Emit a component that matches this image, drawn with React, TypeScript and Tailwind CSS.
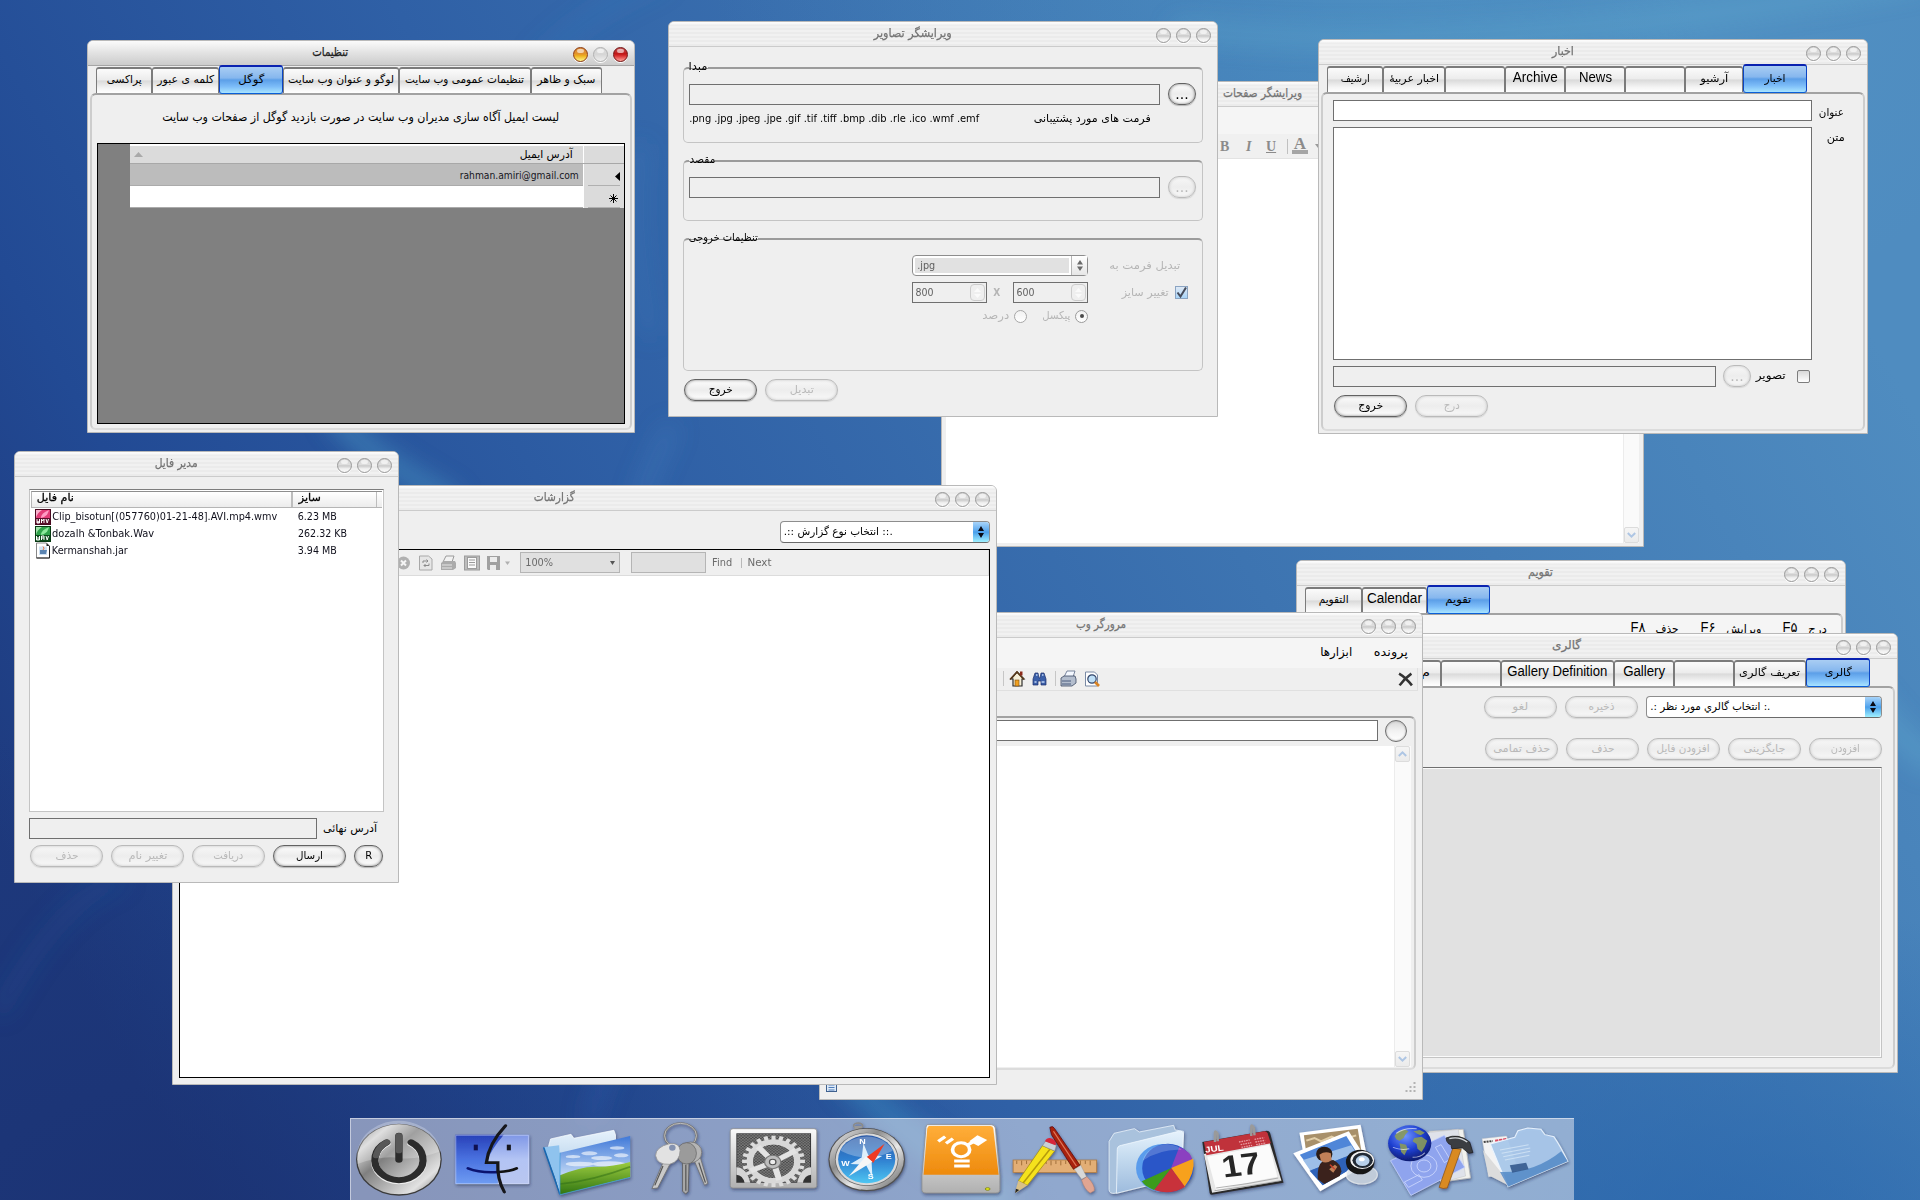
import { useLayoutEffect, useRef, type ReactNode } from "react";

/* Text squeezed or stretched to an exact pixel width. */
function Fit({ w, children, className = "", rtl = false }: { w: number; children: ReactNode; className?: string; rtl?: boolean }) {
  const ref = useRef<HTMLSpanElement>(null);
  useLayoutEffect(() => {
    const el = ref.current;
    if (!el) return;
    el.style.transform = "none";
    const natural = el.getBoundingClientRect().width;
    if (natural > 0) el.style.transform = `scaleX(${w / natural})`;
  }, [w]);
  return (
    <span className={"inline-flex shrink-0 justify-center whitespace-nowrap " + className} style={{ width: w }}>
      <span ref={ref} dir={rtl ? "rtl" : "ltr"} className="inline-block shrink-0">
        {children}
      </span>
    </span>
  );
}

const lightTone = {
  idle: "border-[#989898] bg-[linear-gradient(180deg,#d6d6d6_0%,#dedede_45%,#c9c9c9_52%,#f0f0f0_75%,#fafafa_100%)]",
  clear: "border-[#b0b0b0] bg-[linear-gradient(180deg,#dadada_0%,#d6d6d6_50%,#efefef_100%)]",
  amber: "border-[#8c3a10] bg-[linear-gradient(180deg,#d88a3c_0%,#e2922a_45%,#eeb01c_60%,#fdf68a_100%)]",
  red: "border-[#741212] bg-[linear-gradient(180deg,#c45454_0%,#bf1616_45%,#d83030_60%,#ffa59c_100%)]",
};

function Light({ tone }: { tone: keyof typeof lightTone }) {
  return (
    <span className={"flex h-[15px] w-[15px] justify-center rounded-full border shadow-[0_1px_0_#fff] " + lightTone[tone]}>
      <span className="mt-px h-[4px] w-[7px] rounded-full bg-white/60" />
    </span>
  );
}

function Win({ pos, title, tw, active = false, children, shift = "" }: { pos: string; title: string; tw: number; active?: boolean; children?: ReactNode; shift?: string }) {
  return (
    <section className={"absolute isolate flex flex-col overflow-hidden rounded-t-[6px] border border-[#b9b9b9] bg-[#efefef] " + pos}>
      <header
        className={
          "flex h-[25px] shrink-0 items-center border-b pr-[6px] " +
          (active
            ? "border-[#a5a5a5] bg-linear-to-b from-[#fbfbfb] via-[#e2e2e2] to-[#cccccc]"
            : "border-[#cbcbcb] bg-[linear-gradient(180deg,rgba(255,255,255,0.9)_0px,rgba(255,255,255,0)_4px),repeating-linear-gradient(180deg,#f1f1f1_0px,#f1f1f1_2px,#ebebeb_2px,#ebebeb_4px)]")
        }
      >
        <div className={"flex flex-1 justify-center pb-[3px] text-[12px] leading-[16px] " + (active ? "text-[#202020] " : "text-[#747474] ") + shift}>
          <Fit w={tw} rtl className="[-webkit-text-stroke:0.25px_currentColor]">
            {title}
          </Fit>
        </div>
        <div className="flex gap-[5px] pt-[3px]">
          <Light tone={active ? "amber" : "idle"} />
          <Light tone={active ? "clear" : "idle"} />
          <Light tone={active ? "red" : "idle"} />
        </div>
      </header>
      {children}
    </section>
  );
}

function Pill({ children, tw = 0, className, off = false }: { children?: ReactNode; tw?: number; className: string; off?: boolean }) {
  return (
    <button
      className={
        "flex h-[22px] shrink-0 items-center justify-center rounded-full border pb-px text-[11px] leading-[14px] " +
        (off
          ? "border-[#bababa] bg-linear-to-b from-[#f7f7f7] via-[#ededed] to-[#f8f8f8] text-[#b9b9b9] shadow-[inset_0_0_3px_#c4c4c4,0_1px_1px_#d6d6d6] "
          : "border-[#626262] bg-linear-to-b from-[#fdfdfd] via-[#ececec] to-[#ffffff] text-black shadow-[inset_0_0_3px_#7c7c7c,0_1px_1px_#b5b5b5] ") +
        className
      }
    >
      {tw ? (
        <Fit w={tw} rtl>
          {children}
        </Fit>
      ) : (
        children
      )}
    </button>
  );
}

function Tab({ children, tw = 0, w, on = false, latin = false }: { children?: ReactNode; tw?: number; w: string; on?: boolean; latin?: boolean }) {
  return (
    <div
      className={
        "flex shrink-0 items-center justify-center rounded-t-[3px] " +
        w +
        (on
          ? " z-10 h-[29px] rounded-b-[3px] border border-t-2 border-t-[#0a22b0] border-r-[#0b45c4] border-b-[#0a5fd8] border-l-[#0b45c4] bg-[linear-gradient(180deg,#a9cdf3_0%,#86b7ee_42%,#5c9fe8_50%,#7cbcf8_75%,#a8e4ff_100%)] text-[11px]"
          : " mt-[2px] h-[26px] border border-t-2 border-b-0 border-[#7b7b7b] bg-[linear-gradient(180deg,#fbfbfb_0%,#ececec_45%,#dadada_50%,#f4f4f4_80%,#ffffff_100%)] text-[11px]")
      }
    >
      {children && (
        <Fit
          w={tw}
          rtl={!latin}
          className={latin ? "pb-[6px] font-['Liberation_Sans',sans-serif] text-[14px] leading-[16px]" : on ? "leading-[14px]" : "pb-[2px] leading-[14px]"}
        >
          {children}
        </Fit>
      )}
    </div>
  );
}

function TabRow({ className, children }: { className: string; children: ReactNode }) {
  return <div className={"relative z-10 -mt-px flex h-[28px] shrink-0 " + className}>{children}</div>;
}

function Panel({ className, children }: { className: string; children?: ReactNode }) {
  return (
    <div className={"flex shrink-0 flex-col rounded-[6px] border-2 border-[#cdcdcd] border-t-[#a2a2a2] border-b-[#dcdcdc] " + className}>{children}</div>
  );
}

function Field({ className }: { className: string }) {
  return <div className={"h-[21px] shrink-0 border border-[#6f6f6f] " + className} />;
}

function Combo({ className, children, tw }: { className: string; children: ReactNode; tw: number }) {
  return (
    <div className={"flex h-[22px] shrink-0 items-stretch overflow-hidden rounded-[4px] border border-[#8d8d8d] border-b-[#6a6a6a] bg-white " + className}>
      <div className="flex flex-1 items-center pl-[3px] text-[11px] leading-[14px]">
        <Fit w={tw}>{children}</Fit>
      </div>
      <div className="flex w-[16px] items-center justify-center bg-[linear-gradient(180deg,#a8d4fa_0%,#5aa8ee_45%,#4a9eea_50%,#9ef0ff_100%)]">
        <svg className="h-[12px] w-[6px]" viewBox="0 0 6 12">
          <path d="M3 0 6 5H0zM3 12 0 7h6z" fill="#0a0a14" />
        </svg>
      </div>
    </div>
  );
}

function ScrollButton({ up = false }: { up?: boolean }) {
  return (
    <div className="flex h-[16px] w-[15px] shrink-0 items-center justify-center rounded-[2px] border border-[#dcdcdc] bg-linear-to-b from-[#f5f5f5] to-[#ebebeb]">
      <svg className={up ? "h-[6px] w-[9px]" : "h-[6px] w-[9px] rotate-180"} viewBox="0 0 9 6">
        <path d="M.8 5 4.5 1.4 8.2 5" fill="none" stroke="#aec6e4" strokeWidth="2" />
      </svg>
    </div>
  );
}

function Wallpaper() {
  return (
    <svg className="absolute inset-0 h-full w-full" viewBox="0 0 1920 1200" preserveAspectRatio="none">
      <defs>
        <linearGradient id="sky" x1="0" y1="0.7" x2="1" y2="0.35">
          <stop offset="0" stopColor="#1e3a7e" />
          <stop offset="0.15" stopColor="#224a94" />
          <stop offset="0.4" stopColor="#2f60a6" />
          <stop offset="0.65" stopColor="#3d74b1" />
          <stop offset="1" stopColor="#4f8cc0" />
        </linearGradient>
        <radialGradient id="low" cx="0.1" cy="1.02" r="0.42">
          <stop offset="0" stopColor="#1a3070" stopOpacity="0.7" />
          <stop offset="1" stopColor="#1a3070" stopOpacity="0" />
        </radialGradient>
        <radialGradient id="hi" cx="0.72" cy="-0.02" r="0.35">
          <stop offset="0" stopColor="#55a3cf" stopOpacity="0.35" />
          <stop offset="1" stopColor="#55a3cf" stopOpacity="0" />
        </radialGradient>
        <radialGradient id="corner" cx="0.9" cy="1.05" r="0.3">
          <stop offset="0" stopColor="#2463ab" stopOpacity="0.7" />
          <stop offset="1" stopColor="#2463ab" stopOpacity="0" />
        </radialGradient>
        <filter id="soft" x="-50%" y="-50%" width="200%" height="200%">
          <feGaussianBlur stdDeviation="12" />
        </filter>
      </defs>
      <rect width="1920" height="1200" fill="url(#sky)" />
      <rect width="1920" height="1200" fill="url(#low)" />
      <rect width="1920" height="1200" fill="url(#hi)" />
      <rect width="1920" height="1200" fill="url(#corner)" />
      <g fill="none" filter="url(#soft)" strokeLinecap="round">
        <path d="M540 60Q590 10 660 -20" stroke="#3c7fc0" strokeWidth="14" opacity="0.3" />
        <path d="M0 1010Q60 900 120 880" stroke="#2f62a8" strokeWidth="10" opacity="0.3" />
        <path d="M335 415Q360 450 450 500" stroke="#52aad0" strokeWidth="18" opacity="0.5" />
        <path d="M640 500Q650 470 670 430" stroke="#4f8fcf" strokeWidth="12" opacity="0.35" />
        <path d="M850 1080Q900 1130 1000 1200" stroke="#3f9fd0" strokeWidth="26" opacity="0.4" />
        <path d="M590 1120Q600 1080 620 1050" stroke="#3a70c0" strokeWidth="12" opacity="0.35" />
        <path d="M1180 30Q1500 60 1920 -20" stroke="#66b5d2" strokeWidth="16" opacity="0.35" />
        <path d="M1870 700Q1900 740 1930 760" stroke="#66b5d8" strokeWidth="24" opacity="0.35" />
        <path d="M640 150Q630 230 650 330" stroke="#3f86c0" strokeWidth="14" opacity="0.3" />
      </g>
    </svg>
  );
}

function SettingsWindow() {
  return (
    <Win pos="left-[87px] top-[40px] h-[393px] w-[548px]" title="تنظیمات" tw={36} active>
      <TabRow className="pl-[8px]">
        <Tab w="w-[56px]" tw={35}>پراکسی</Tab>
        <Tab w="w-[67px]" tw={57}>کلمه ی عبور</Tab>
        <Tab w="w-[64px]" tw={26} on>گوگل</Tab>
        <Tab w="w-[116px]" tw={106}>لوگو و عنوان وب سایت</Tab>
        <Tab w="w-[132px]" tw={119}>تنظیمات عمومی وب سایت</Tab>
        <Tab w="w-[71px]" tw={58}>سبک و ظاهر</Tab>
      </TabRow>
      <Panel className="mx-[2px] h-[337px]">
        <div className="flex h-[48px] shrink-0 items-center justify-center pb-[5px] text-[12px] leading-[16px]">
          <Fit w={397} rtl>لیست ایمیل آگاه سازی مدیران وب سایت در صورت بازدید گوگل از صفحات وب سایت</Fit>
        </div>
        <div className="ml-[5px] flex h-[281px] w-[528px] flex-col border border-black bg-[#808080] pl-[32px]">
          <div className="flex h-[20px] border-t-2 border-b border-t-white border-b-[#a8a8a8] bg-[#dbdbdb]">
            <div className="flex flex-1 items-center justify-between border-r border-white pr-[10px] pl-[4px] text-[11px] leading-[14px]">
              <svg className="h-[5px] w-[9px]" viewBox="0 0 9 5">
                <path d="M4.5 0 9 5H0z" fill="#a9a9a9" />
              </svg>
              <Fit w={53} rtl>آدرس ایمیل</Fit>
            </div>
            <div className="w-[40px]" />
          </div>
          <div className="flex h-[22px]">
            <div className="flex flex-1 items-center justify-end border-b border-[#ababab] bg-[#bcbcbc] pt-[2px] pr-[4px] text-[11px] leading-[14px] text-[#16161e]">
              <Fit w={119} className="font-['DejaVu_Sans_Condensed','DejaVu_Sans',sans-serif]">rahman.amiri@gmail.com</Fit>
            </div>
            <div className="flex w-[41px] border-l border-white bg-[#dbdbdb] px-[4px]">
              <div className="flex flex-1 items-center justify-end border-b border-[#b0b0b0] pt-[3px]">
                <svg className="h-[9px] w-[5px]" viewBox="0 0 5 9">
                  <path d="M5 0v9L0 4.500z" />
                </svg>
              </div>
            </div>
          </div>
          <div className="flex h-[22px]">
            <div className="flex-1 border-b border-[#ababab] bg-white" />
            <div className="flex w-[41px] border-l border-white bg-[#dbdbdb] px-[4px]">
              <div className="flex flex-1 items-center justify-end border-b border-[#b0b0b0] pt-[3px] pr-[2px]">
                <svg className="h-[9px] w-[9px]" viewBox="0 0 9 9" stroke="#000">
                  <path d="M4.500 0v9M0 4.500h9M1.500 1.500l6 6M7.500 1.500l-6 6" />
                </svg>
              </div>
            </div>
          </div>
        </div>
      </Panel>
    </Win>
  );
}

function Group({ label, tw, className, children }: { label: string; tw: number; className: string; children: ReactNode }) {
  return (
    <fieldset className={"ml-[14px] flex w-[520px] shrink-0 flex-col rounded-[5px] border border-t-2 border-[#c4c4c4] border-t-[#9b9b9b] " + className}>
      <div className="-mt-[9px] mb-[9px] ml-[5px] flex h-[14px] shrink-0 text-[11px] leading-[14px]">
        <Fit w={tw} rtl className="bg-linear-to-b from-[#efefef] from-60% to-transparent to-60%">{label}</Fit>
      </div>
      {children}
    </fieldset>
  );
}

function Spin({ value }: { value: string }) {
  return (
    <div className="flex h-[21px] w-[75px] shrink-0 items-center justify-between border border-[#6f6f6f] pr-px pl-[2px] text-[11px] leading-[14px] text-[#5f5f5f]">
      <Fit w={18} className="font-['DejaVu_Sans_Condensed','DejaVu_Sans',sans-serif]">{value}</Fit>
      <span className="flex h-[17px] w-[15px] items-center justify-center rounded-[4px] border border-[#cccccc]">
        <svg className="h-[10px] w-[7px]" viewBox="0 0 7 10">
          <path d="M3.500 0 7 4H0zM3.500 10 0 6h7z" fill="#fafafa" />
        </svg>
      </span>
    </div>
  );
}

function ImageEditorWindow() {
  return (
    <Win pos="left-[668px] top-[21px] h-[396px] w-[550px]" title="ویرایشگر تصاویر" tw={78}>
      <Group label="مبدا" tw={19} className="mt-[20px] h-[76px]">
        <div className="flex pl-[5px]">
          <Field className="mt-px w-[471px]" />
          <Pill className="ml-[8px] w-[28px] pb-[5px] text-[14px]">...</Pill>
        </div>
        <div className="flex items-center justify-between pt-[7px] pr-[51px] pl-[5px] text-[11px] leading-[14px]">
          <Fit w={290} className="font-['DejaVu_Sans_Condensed','DejaVu_Sans',sans-serif]">.png .jpg .jpeg .jpe .gif .tif .tiff .bmp .dib .rle .ico .wmf .emf</Fit>
          <Fit w={117} rtl>فرمت های مورد پشتیبانی</Fit>
        </div>
      </Group>
      <Group label="مقصد" tw={26} className="mt-[17px] h-[61px]">
        <div className="flex pl-[5px]">
          <Field className="mt-px w-[471px]" />
          <Pill off className="ml-[8px] w-[28px] pb-[5px] text-[14px]">...</Pill>
        </div>
      </Group>
      <Group label="تنظیمات خروجی" tw={69} className="mt-[17px] h-[133px]">
        <div className="flex items-center pt-px pl-[228px]">
          <div className="flex h-[21px] w-[176px] items-stretch rounded-[4px] border border-[#8d8d8d] bg-white text-[11px] leading-[14px] text-[#5f5f5f]">
            <div className="m-[2px] flex flex-1 items-center bg-[#e1e1e1] pl-[2px]">
              <Fit w={18} className="font-['DejaVu_Sans_Condensed','DejaVu_Sans',sans-serif]">.jpg</Fit>
            </div>
            <div className="flex w-[16px] items-center justify-center border-l border-[#b5b5b5] bg-linear-to-b from-white to-[#e6e6e6]">
              <svg className="h-[11px] w-[6px]" viewBox="0 0 6 11">
                <path d="M3 0 6 4.600H0zM3 11 0 6.400h6z" fill="#6a6a6a" />
              </svg>
            </div>
          </div>
          <Fit w={71} rtl className="ml-[21px] text-[11px] leading-[14px] text-[#b5b5b5]">تبدیل فرمت به</Fit>
        </div>
        <div className="mt-[6px] flex items-center pl-[228px]">
          <Spin value="800" />
          <Fit w={7} className="mr-[13px] ml-[6px] text-[10px] font-bold leading-[14px] text-[#b5b5b5]">X</Fit>
          <Spin value="600" />
          <Fit w={47} rtl className="ml-[34px] text-[11px] leading-[14px] text-[#b5b5b5]">تغییر سایز</Fit>
          <span className="ml-[6px] flex h-[13px] w-[13px] items-center justify-center border border-[#8ba4c2] bg-linear-to-b from-[#dfe9f5] to-[#a8d4f8]">
            <svg className="h-[12px] w-[11px]" viewBox="0 0 11 12">
              <path d="M1.500 5.500 4.500 9.500 10 .500" fill="none" stroke="#454b5a" strokeWidth="2" />
            </svg>
          </span>
        </div>
        <div className="mt-[6px] flex items-center pl-[298px] text-[11px] leading-[14px] text-[#b5b5b5]">
          <Fit w={27} rtl>درصد</Fit>
          <span className="ml-[5px] h-[13px] w-[13px] rounded-full border border-[#a6a6a6] bg-linear-to-b from-[#f2f2f2] to-white" />
          <Fit w={28} rtl className="ml-[15px]">پیکسل</Fit>
          <span className="ml-[5px] flex h-[13px] w-[13px] items-center justify-center rounded-full border border-[#9a9a9a] bg-linear-to-b from-[#f2f2f2] to-white">
            <span className="h-[4px] w-[4px] rounded-full bg-[#4b4b4b]" />
          </span>
        </div>
      </Group>
      <div className="mt-[8px] flex gap-[8px] pl-[15px]">
        <Pill className="w-[73px]" tw={24}>خروج</Pill>
        <Pill off className="w-[73px]" tw={24}>تبدیل</Pill>
      </div>
    </Win>
  );
}

function PageEditorWindow() {
  return (
    <Win pos="left-[941px] top-[81px] h-[466px] w-[703px]" title="ویرایشگر صفحات" tw={79} shift="pl-[2px]">
      <div className="h-[27px] shrink-0 bg-[#f5f5f5]" />
      <div className="flex h-[25px] shrink-0 items-center border-b border-[#e3e3e3] bg-[#f0f0f0] pl-[278px] font-['Liberation_Serif',serif] text-[14px] font-bold text-[#8b8b8b]">
        <span className="w-[23px]">B</span>
        <span className="w-[23px] pl-[3px] italic">I</span>
        <span className="w-[21px] underline">U</span>
        <span className="h-[15px] w-px bg-[#c0c0c0]" />
        <span className="ml-[4px] flex h-[16px] w-[16px] items-start justify-center border-b-4 border-[#a5a5a5] text-[17px] leading-[12px]">A</span>
        <svg className="ml-[7px] h-[4px] w-[6px]" viewBox="0 0 6 4">
          <path d="M0 0h6L3 4z" fill="#9a9a9a" />
        </svg>
      </div>
      <div className="mr-[4px] mb-[3px] ml-[4px] flex flex-1 justify-end bg-white">
        <div className="flex w-[16px] flex-col justify-end border-l border-[#ececec] bg-[#fafafa]">
          <ScrollButton />
        </div>
      </div>
    </Win>
  );
}

function NewsWindow() {
  return (
    <Win pos="left-[1318px] top-[39px] h-[395px] w-[550px]" title="اخبار" tw={22}>
      <TabRow className="pl-[8px]">
        <Tab w="w-[56px]" tw={29}>ارشیف</Tab>
        <Tab w="w-[62px]" tw={50}>اخبار عربیۀ</Tab>
        <Tab w="w-[60px]" />
        <Tab w="w-[60px]" tw={45} latin>Archive</Tab>
        <Tab w="w-[60px]" tw={33} latin>News</Tab>
        <Tab w="w-[60px]" />
        <Tab w="w-[58px]" tw={28}>آرشیو</Tab>
        <Tab w="w-[64px]" tw={21} on>اخبار</Tab>
      </TabRow>
      <Panel className="mx-[2px] h-[339px]">
        <div className="flex pt-[6px] pl-[10px]">
          <Field className="w-[479px] bg-white" />
          <Fit w={25} rtl className="mt-[6px] ml-[7px] text-[11px] leading-[14px]">عنوان</Fit>
        </div>
        <div className="flex pt-[6px] pl-[10px]">
          <div className="h-[233px] w-[479px] border border-[#6f6f6f] bg-white" />
          <Fit w={18} rtl className="mt-[4px] ml-[15px] h-[14px] text-[11px] leading-[14px]">متن</Fit>
        </div>
        <div className="flex items-center pt-[5px] pl-[10px]">
          <Field className="mt-px w-[383px]" />
          <Pill off className="ml-[7px] w-[28px] pb-[5px] text-[14px]">...</Pill>
          <Fit w={30} rtl className="ml-[5px] text-[11px] leading-[14px]">تصویر</Fit>
          <span className="ml-[11px] h-[13px] w-[13px] rounded-[2px] border border-[#7d7d7d] bg-linear-to-b from-[#d8d8d8] to-white" />
        </div>
        <div className="flex gap-[8px] pt-[8px] pl-[11px]">
          <Pill className="w-[73px]" tw={25}>خروج</Pill>
          <Pill off className="w-[73px]" tw={16}>درج</Pill>
        </div>
      </Panel>
    </Win>
  );
}

function MediaIcon({ kind }: { kind: "wmv" | "wav" | "jar" }) {
  if (kind === "jar")
    return (
      <svg className="h-[17px] w-[16px]" viewBox="0 0 16 17">
        <path d="M1.500 1h10l3 3v12h-13z" fill="#fff" stroke="#888" />
        <path d="M14.500 4v12h-13" fill="none" stroke="#222" />
        <path d="M11.500 1v3h3z" fill="#222" />
        <rect x="4" y="4.500" width="8" height="8.500" fill="#cfe2f3" />
        <path d="M5 12h6l1-4H5z" fill="#5b84b1" />
        <path d="M8 4.500q2 1.500 0 3.500" stroke="#e66f3a" fill="none" />
      </svg>
    );
  const pink = kind === "wmv";
  return (
    <svg className="h-[16px] w-[16px]" viewBox="0 0 16 16">
      <rect x=".5" y=".5" width="15" height="15" fill={pink ? "#e23d78" : "#2fa24a"} stroke={pink ? "#4a0a20" : "#063a12"} />
      <path d="M1 1h6Q2 4 1 9z" fill={pink ? "#f8b0cc" : "#9fe0a8"} />
      <path d="M14 1Q6 4 6 9l3-1Q13 6 14 1z" fill={pink ? "#ff9cc4" : "#8de89c"} />
      <rect x="1" y="9" width="14" height="6" fill={pink ? "#5a0e2b" : "#0c4a1b"} />
      {pink ? (
        <path d="M2 10v4h1v-2 2h1.500v-4M6.500 14v-4l1.200 2L9 10v4M11 10l1.200 4L13.500 10" stroke="#fff" fill="none" />
      ) : (
        <path d="M1.500 10v4h3v-4M3 11v3M6.500 14v-4h2.500v4M6.500 12h2.500M11 10l1.200 4L13.500 10" stroke="#fff" fill="none" />
      )}
    </svg>
  );
}

function FileManagerWindow() {
  const rows: { kind: "wmv" | "wav" | "jar"; name: string; nw: number; size: string; sw: number }[] = [
    { kind: "wmv", name: "Clip_bisotun[(057760)01-21-48].AVI.mp4.wmv", nw: 225, size: "6.23 MB", sw: 39 },
    { kind: "wav", name: "dozalh &Tonbak.Wav", nw: 102, size: "262.32 KB", sw: 49 },
    { kind: "jar", name: "Kermanshah.jar", nw: 76, size: "3.94 MB", sw: 39 },
  ];
  return (
    <Win pos="left-[14px] top-[451px] h-[432px] w-[385px]" title="مدیر فایل" tw={43}>
      <div className="mt-[12px] ml-[14px] h-[323px] w-[355px] shrink-0 border border-[#c4c4c4] border-t-[#7d7d7d] bg-white p-px">
        <div className="flex h-[17px] border-t border-b border-l border-t-[#8e8e8e] border-b-[#b5b5b5] border-l-[#b5b5b5] bg-linear-to-b from-white to-[#ececec] text-[11px] leading-[11px]">
          <div className="flex w-[261px] border-r-2 border-[#bdbdbd] pl-[5px]">
            <Fit w={37} rtl className="[-webkit-text-stroke:0.3px_#000]">نام فایل</Fit>
          </div>
          <div className="flex w-[84px] border-r border-[#bdbdbd] pl-[6px]">
            <Fit w={22} rtl className="[-webkit-text-stroke:0.3px_#000]">سایز</Fit>
          </div>
        </div>
        {rows.map((r) => (
          <div key={r.kind} className="flex h-[17px] items-center pl-[4px] font-['DejaVu_Sans_Condensed','DejaVu_Sans',sans-serif] text-[11px] leading-[14px] text-[#10101c]">
            <MediaIcon kind={r.kind} />
            <div className="flex w-[247px] pl-px">
              <Fit w={r.nw}>{r.name}</Fit>
            </div>
            <Fit w={r.sw}>{r.size}</Fit>
          </div>
        ))}
      </div>
      <div className="mt-[6px] flex items-center pl-[14px]">
        <Field className="w-[288px]" />
        <Fit w={54} rtl className="ml-[6px] text-[11px] leading-[14px]">آدرس نهائی</Fit>
      </div>
      <div className="mt-[6px] flex gap-[8px] pl-[15px]">
        <Pill off className="w-[73px]" tw={23}>حذف</Pill>
        <Pill off className="w-[73px]" tw={39}>تغییر نام</Pill>
        <Pill off className="w-[73px]" tw={30}>دریافت</Pill>
        <Pill className="w-[73px]" tw={27}>ارسال</Pill>
        <Pill className="w-[29px]">
          <Fit w={7}>R</Fit>
        </Pill>
      </div>
    </Win>
  );
}

function ReportsWindow() {
  return (
    <Win pos="left-[172px] top-[485px] h-[600px] w-[825px]" title="گزارشات" tw={41}>
      <div className="flex h-[38px] shrink-0 items-start justify-end pt-[10px] pr-[6px]">
        <Combo className="w-[210px]" tw={109}>.:: انتخاب نوع گزارش ::.</Combo>
      </div>
      <div className="ml-[6px] flex h-[529px] w-[811px] flex-col border border-black bg-white">
        <div className="flex h-[26px] shrink-0 items-center border-r border-b border-[#dcdcdc] bg-[#efefef] pl-[216px] font-['DejaVu_Sans_Condensed','DejaVu_Sans',sans-serif] text-[11px] text-[#6b6b6b]">
          <svg className="h-[16px] w-[120px]" viewBox="0 0 120 16">
            <circle cx="7.500" cy="8" r="6.500" fill="#b0b0b0" />
            <path d="M5 5.500l5 5M10 5.500l-5 5" stroke="#f5f5f5" strokeWidth="2" />
            <path d="M23.500 1h9l3.500 3v11H23.500z" fill="#e6e6e6" stroke="#a8a8a8" />
            <path d="M27 8V6h5m-1.500-1.500L32 6l-1.500 1.500M33 8.500v2h-5m1.500-1.500L28 10.500l1.500 1.500" stroke="#8a8a8a" fill="none" />
            <path d="M47 7l3-6h8l-2 6z" fill="#f2f2f2" stroke="#9a9a9a" />
            <path d="M45 8l3-2h11l1 2v5l-3 2H45z" fill="#ababab" />
            <path d="M46 10h10M46 13h10" stroke="#e6e6e6" />
            <rect x="68.500" y="1" width="15" height="14" fill="#bdbdbd" stroke="#9c9c9c" />
            <rect x="71.500" y="2.500" width="9" height="11" fill="#fafafa" stroke="#9c9c9c" />
            <path d="M73 5h6M73 7.500h6M73 10h6" stroke="#9a9a9a" />
            <path d="M91 1h13v14H92l-1-1z" fill="#a0a0a0" />
            <path d="M94 2h7v5h-7zM94 10h6v5h-6z" fill="#ececec" />
            <path d="M109 6.500h5L111.500 10z" fill="#b0b0b0" />
          </svg>
          <div className="ml-[4px] flex h-[21px] w-[100px] items-center justify-between border border-[#b5b5b5] bg-[#e0e0e0] pt-px pr-[4px] pl-[4px]">
            <Fit w={28} className="leading-[14px]">100%</Fit>
            <svg className="h-[4px] w-[5px]" viewBox="0 0 5 4">
              <path d="M0 0h5L2.500 4z" fill="#555" />
            </svg>
          </div>
          <div className="ml-[11px] h-[21px] w-[75px] border border-[#b5b5b5] bg-[#e0e0e0]" />
          <Fit w={20} className="ml-[6px] leading-[14px]">Find</Fit>
          <span className="ml-[9px] h-[10px] w-px bg-[#b9b9b9]" />
          <Fit w={24} className="ml-[6px] leading-[14px]">Next</Fit>
        </div>
      </div>
    </Win>
  );
}

function CalendarWindow() {
  return (
    <Win pos="left-[1296px] top-[560px] h-[400px] w-[550px]" title="تقویم" tw={25}>
      <TabRow className="pl-[8px]">
        <Tab w="w-[57px]" tw={30}>التقویم</Tab>
        <Tab w="w-[65px]" tw={55} latin>Calendar</Tab>
        <Tab w="w-[63px]" tw={26} on>تقویم</Tab>
      </TabRow>
      <Panel className="mx-[2px] h-[340px] bg-[#f5f5f5]">
        <div className="flex justify-end pt-[4px] pr-[14px] text-[12px] leading-[16px]">
          {[
            { key: "F۸", label: "حذف", w: 23, gap: "mr-[22px]" },
            { key: "F۶", label: "ویرایش", w: 35, gap: "mr-[22px]" },
            { key: "F۵", label: "درج", w: 19, gap: "" },
          ].map((m) => (
            <div key={m.key} className={"flex " + m.gap}>
              <Fit w={15} className="mr-[10px] font-['Liberation_Sans','DejaVu_Sans',sans-serif] text-[14px]">{m.key}</Fit>
              <Fit w={m.w} rtl className="pt-[2px]">{m.label}</Fit>
            </div>
          ))}
        </div>
      </Panel>
    </Win>
  );
}

function GalleryWindow() {
  return (
    <Win pos="left-[1297px] top-[633px] h-[440px] w-[601px]" title="گالری" tw={29}>
      <TabRow className="pl-[111px]">
        <Tab w="w-[32px]" tw={9}>م</Tab>
        <Tab w="w-[60px]" />
        <Tab w="w-[113px]" tw={100} latin>Gallery Definition</Tab>
        <Tab w="w-[60px]" tw={42} latin>Gallery</Tab>
        <Tab w="w-[60px]" />
        <Tab w="w-[72px]" tw={61}>تعریف گالری</Tab>
        <Tab w="w-[64px]" tw={27} on>گالری</Tab>
      </TabRow>
      <Panel className="mx-[2px] h-[383px] pl-[2px]">
        <div className="flex justify-end gap-[8px] pt-[8px] pr-[11px]">
          <Pill off className="w-[73px]" tw={16}>لغو</Pill>
          <Pill off className="w-[73px]" tw={26}>ذخیره</Pill>
          <Combo className="w-[236px]" tw={120}>.: انتخاب گالري مورد نظر :.</Combo>
        </div>
        <div className="flex justify-end gap-[8px] pt-[20px] pr-[11px]">
          <Pill off className="w-[73px]" tw={57}>حذف تمامی</Pill>
          <Pill off className="w-[73px]" tw={23}>حذف</Pill>
          <Pill off className="w-[73px]" tw={53}>افزودن فایل</Pill>
          <Pill off className="w-[73px]" tw={42}>جایگزینی</Pill>
          <Pill off className="w-[73px]" tw={29}>افزودن</Pill>
        </div>
        <div className="mt-[7px] mr-[11px] h-[291px] border border-[#c4c4c4] border-t-[#6f6f6f] bg-[#e1e1e1] shadow-[inset_0_0_0_1px_#fafafa]" />
      </Panel>
    </Win>
  );
}

function BrowserWindow() {
  return (
    <Win pos="left-[819px] top-[612px] h-[488px] w-[604px]" title="مرورگر وب" tw={50} shift="pl-[21px]">
      <div className="flex h-[30px] shrink-0 items-center justify-end gap-[22px] bg-[#f5f5f5] pr-[14px] pb-[2px] text-[12px] leading-[16px]">
        <Fit w={32} rtl>ابزارها</Fit>
        <Fit w={34} rtl>پرونده</Fit>
      </div>
      <div className="mr-[4px] flex h-[23px] shrink-0 items-center border-r border-b border-[#e0e0e0] pl-[182px]">
        <svg className="h-[18px] w-[120px]" viewBox="0 0 120 18">
          <path d="M1.500 1v15M53.500 1v15" stroke="#c6c6c6" />
          <path d="M9 9h2v7h9V9h2l-7-7z" fill="#f5efd8" stroke="#2d2d2d" strokeWidth="1.200" />
          <path d="M8 9.500 15 2l7 7.500" fill="none" stroke="#5a3a1a" strokeWidth="1.600" />
          <rect x="18" y="1.500" width="2.500" height="4" fill="#8c2a1a" />
          <rect x="13" y="10" width="4" height="6" fill="#f0a020" stroke="#7a4a10" strokeWidth=".6" />
          <path d="M31 15V9l2-6h3l1 5h1l1-5h3l2 6v6h-5v-4h-3v4z" fill="#3b5fa8" stroke="#1c2f6a" strokeWidth=".7" />
          <path d="M32.500 12h2M39.500 12h3M34 5h1.500M40 5h1.500" stroke="#bfd4f5" strokeWidth="1.300" />
          <path d="M62 7l3-6h8l-2 6z" fill="#f4f8ff" stroke="#5a6a86" strokeWidth=".8" />
          <path d="M59 8l3-2h11l1 3v4l-4 3H59z" fill="#b3bdcd" stroke="#3d4a63" strokeWidth=".8" />
          <path d="M60 11h9M60 14h9" stroke="#4a5c7e" />
          <path d="M83.500 2h9l3 3v11h-12z" fill="#fff" stroke="#7a8aa5" />
          <circle cx="90" cy="9" r="4.200" fill="#bfe0f8" stroke="#33456a" strokeWidth="1.200" />
          <path d="M93 12l4 4" stroke="#d98324" strokeWidth="2.600" />
        </svg>
        <svg className="mr-[4px] ml-auto h-[15px] w-[15px]" viewBox="0 0 14 14">
          <path d="M1 1.500Q7 5 13 12.500M12.500 1.500Q6 6 1.500 12.500" stroke="#333" strokeWidth="2.400" fill="none" />
        </svg>
      </div>
      <Panel className="mt-[25px] mr-[6px] ml-[6px] h-[354px]">
        <div className="flex pt-[2px]">
          <Field className="w-[550px] bg-white" />
          <span className="ml-[7px] h-[22px] w-[22px] rounded-full border border-[#6e6e6e] bg-linear-to-b from-[#d9d9d9] via-[#f2f2f2] to-white shadow-[inset_0_0_2px_#999]" />
        </div>
        <div className="mt-[4px] mr-[3px] flex h-[321px] justify-end bg-white">
          <div className="flex w-[17px] flex-col justify-between border-l border-[#ececec] bg-[#fafafa]">
            <ScrollButton up />
            <ScrollButton />
          </div>
        </div>
      </Panel>
      <div className="flex flex-1 items-center justify-between pr-[5px] pl-[6px]">
        <svg className="mt-[2px] h-[14px] w-[12px]" viewBox="0 0 12 14">
          <rect x=".5" y=".5" width="10" height="12" fill="#dce9f8" stroke="#3f618f" />
          <path d="M2.500 3h3M2.500 6h6M2.500 8.500h6M2.500 11h6" stroke="#4f7cb8" />
        </svg>
        <svg className="mt-[6px] h-[11px] w-[12px]" viewBox="0 0 12 11" fill="#b3b3b3">
          <path d="M8.500 0h2v2h-2zM8.500 4h2v2h-2zM8.500 8h2v2h-2zM4.500 4h2v2h-2zM4.500 8h2v2h-2zM.5 8h2v2h-2z" />
        </svg>
      </div>
    </Win>
  );
}

function DockIcon({ vb, children }: { vb: string; children: ReactNode }) {
  return (
    <div className="h-[82px] flex-1">
      <svg className="h-full w-full overflow-visible" viewBox={vb} preserveAspectRatio="none">
        {children}
      </svg>
    </div>
  );
}

function Dock() {
  const teeth = Array.from({ length: 24 }, (_, i) => i * 15);
  return (
    <nav className="absolute top-[1118px] left-[350px] flex h-[82px] w-[1224px] border-t border-l border-white/50 bg-[#e6e8f2]/53 pr-[2px] pl-px">
      <svg className="absolute h-0 w-0">
        <defs>
          <linearGradient id="steel" x1="0" y1="0" x2="1" y2="1">
            <stop offset="0" stopColor="#6a6a6a" />
            <stop offset=".2" stopColor="#d5d5d5" />
            <stop offset=".4" stopColor="#808080" />
            <stop offset=".6" stopColor="#b0b0b0" />
            <stop offset=".8" stopColor="#e2e2e2" />
            <stop offset="1" stopColor="#666666" />
          </linearGradient>
          <linearGradient id="faceL" x1="0" y1="0" x2="0" y2="1">
            <stop offset="0" stopColor="#2740b8" />
            <stop offset=".5" stopColor="#4a72e0" />
            <stop offset="1" stopColor="#6f9cf2" />
          </linearGradient>
          <linearGradient id="faceR" x1="0" y1="0" x2="0" y2="1">
            <stop offset="0" stopColor="#7e96e6" />
            <stop offset=".5" stopColor="#b3c4f4" />
            <stop offset="1" stopColor="#b9c6f0" />
          </linearGradient>
          <linearGradient id="folder" x1="0" y1="0" x2="0" y2="1">
            <stop offset="0" stopColor="#e6f2fc" />
            <stop offset=".4" stopColor="#c6dcf0" />
            <stop offset="1" stopColor="#9dbbdd" />
          </linearGradient>
          <linearGradient id="skyblue" x1="0" y1="0" x2="0" y2="1">
            <stop offset="0" stopColor="#3f78d8" />
            <stop offset=".7" stopColor="#c6dcf6" />
          </linearGradient>
          <linearGradient id="grass" x1="0" y1="0" x2="0" y2="1">
            <stop offset="0" stopColor="#9ccc3e" />
            <stop offset="1" stopColor="#2f7412" />
          </linearGradient>
          <linearGradient id="orange" x1="0" y1="0" x2="0" y2="1">
            <stop offset="0" stopColor="#ffae3a" />
            <stop offset="1" stopColor="#ee8a0c" />
          </linearGradient>
          <linearGradient id="silver" x1="0" y1="0" x2="0" y2="1">
            <stop offset="0" stopColor="#fafafa" />
            <stop offset="1" stopColor="#b0b0b0" />
          </linearGradient>
          <linearGradient id="chrome" x1="0" y1="0" x2="1" y2="1">
            <stop offset="0" stopColor="#f5f5f5" />
            <stop offset=".35" stopColor="#8c8c8c" />
            <stop offset=".6" stopColor="#e8e8e8" />
            <stop offset="1" stopColor="#5c5c5c" />
          </linearGradient>
          <linearGradient id="compass" x1="0" y1="0" x2="0" y2="1">
            <stop offset="0" stopColor="#2a58a6" />
            <stop offset=".5" stopColor="#2f7fd0" />
            <stop offset="1" stopColor="#4ec6f2" />
          </linearGradient>
          <radialGradient id="globe" cx=".4" cy=".3" r=".8">
            <stop offset="0" stopColor="#6f94ff" />
            <stop offset=".5" stopColor="#1e3fd0" />
            <stop offset="1" stopColor="#081050" />
          </radialGradient>
          <pattern id="mesh" width="8" height="8" patternUnits="userSpaceOnUse">
            <rect width="8" height="8" fill="#7d7d7d" />
            <circle cx="2" cy="2" r="1.800" fill="#303030" />
            <circle cx="6" cy="6" r="1.800" fill="#303030" />
          </pattern>
          <filter id="drop" x="-20%" y="-20%" width="140%" height="150%">
            <feDropShadow dx="2" dy="5" stdDeviation="4" floodColor="#1a2a50" floodOpacity=".55" />
          </filter>
        </defs>
      </svg>

      <DockIcon vb="31 55 230 246">
        <g>
          <ellipse cx="146" cy="177" rx="105" ry="108" fill="#3b3b3b" />
          <ellipse cx="146" cy="176" rx="102" ry="105" fill="url(#steel)" />
          <path d="M44 180a102 105 0 0 1 204-28q-60 28-102 20T44 190z" fill="#fff" opacity=".25" />
          <g fill="none" strokeLinecap="round">
            <path d="M116 125a59 61 0 1 0 60 0" stroke="#efefef" strokeWidth="19" transform="translate(0 3)" />
            <path d="M116 125a59 61 0 1 0 60 0" stroke="#2c2c2c" strokeWidth="18" />
            <path d="M146 105v72" stroke="#2c2c2c" strokeWidth="18" />
            <path d="M116 125a59 61 0 0 0-26 40M146 105v45" stroke="#585858" strokeWidth="16" />
          </g>
        </g>
      </DockIcon>

      <DockIcon vb="261 55 230 246">
        <g filter="url(#drop)">
          <path d="M284 102H403Q372 145 360 186H388V250H284z" fill="url(#faceL)" />
          <path d="M403 102H465V250H388V186H360Q372 145 403 102z" fill="url(#faceR)" />
          <path d="M285 104h178v145H285z" fill="none" stroke="#dfe6ff" strokeWidth="2" opacity=".6" />
        </g>
        <path d="M334 132v17" stroke="#101050" strokeWidth="10" />
        <path d="M415 132v17" stroke="#15151c" strokeWidth="10" />
        <path d="M315 203q30 15 75 11" stroke="#0b1470" strokeWidth="8" fill="none" strokeLinecap="round" />
        <path d="M390 214q28-2 44-11" stroke="#111" strokeWidth="8" fill="none" strokeLinecap="round" />
        <path d="M407 75Q365 130 360 186h28q-2 50 16 88" stroke="#16161a" strokeWidth="8" fill="none" strokeLinecap="round" />
      </DockIcon>

      <DockIcon vb="491 55 230 246">
        <g filter="url(#drop)">
          <path d="M512 137l5-22 50-14 7 12 98-24 4 14v90l-136 88z" fill="url(#folder)" stroke="#f8fcff" strokeWidth="2" />
          <path d="M500 140l38-6 6 148z" fill="#8fc3ee" />
          <path d="M500 140l40 142" stroke="#1667b0" strokeWidth="4" />
          <path d="M540 156l172-50v124l-172 52z" fill="url(#skyblue)" />
          <g fill="#fff" opacity=".6">
            <ellipse cx="572" cy="168" rx="18" ry="5" />
            <ellipse cx="612" cy="158" rx="20" ry="6" />
            <ellipse cx="642" cy="172" rx="26" ry="6" />
            <ellipse cx="680" cy="142" rx="18" ry="5" />
            <ellipse cx="588" cy="190" rx="34" ry="7" />
            <ellipse cx="660" cy="190" rx="40" ry="8" />
            <ellipse cx="690" cy="164" rx="18" ry="6" />
          </g>
          <path d="M540 224q50-26 84-26 40 2 88-14v46l-172 52z" fill="url(#grass)" />
          <path d="M540 250q80-10 172-52" fill="none" stroke="#2c6a14" strokeWidth="5" opacity=".5" />
          <path d="M540 156v126l172-52" fill="none" stroke="#3b98d8" strokeWidth="2" />
        </g>
      </DockIcon>

      <DockIcon vb="721 55 230 246">
        <g filter="url(#drop)">
          <ellipse cx="835" cy="105" rx="39" ry="37" fill="none" stroke="#777" strokeWidth="6" />
          <ellipse cx="835" cy="105" rx="39" ry="37" fill="none" stroke="#d5d5d5" strokeWidth="2" />
          <path d="M868 178l16-6 18 76-8 6z" fill="#bdbdbd" stroke="#6a6a6a" strokeWidth="2" />
          <path d="M840 180h16l-2 92-6 8-8-8z" fill="#a8a8a8" stroke="#555" strokeWidth="2" />
          <path d="M794 180l17 6-32 76-14 2z" fill="#c9c9c9" stroke="#666" strokeWidth="2" />
          <ellipse cx="860" cy="155" rx="27" ry="31" fill="#b5b5b5" stroke="#707070" strokeWidth="2" />
          <ellipse cx="850" cy="158" rx="24" ry="32" fill="#9b9b9b" stroke="#666" strokeWidth="2" />
          <path d="M774 165q0-26 34-36 24-4 26 20 0 34-26 42-30 2-34-26z" fill="#e2e2e2" stroke="#909090" strokeWidth="2" />
          <ellipse cx="815" cy="141" rx="8" ry="9" fill="#8492b0" />
          <path d="M792 196l-20 58M848 192v78M880 186l16 60" stroke="#555" strokeWidth="3" />
        </g>
      </DockIcon>

      <DockIcon vb="951 55 230 246">
        <g filter="url(#drop)">
          <rect x="959" y="84" width="212" height="178" rx="7" fill="url(#silver)" stroke="#8a8a8a" strokeWidth="2" />
          <rect x="974" y="98" width="183" height="148" fill="#2c2c2e" />
          <rect x="976" y="100" width="179" height="144" fill="url(#mesh)" />
          <g fill="#dcdcdc">
            {teeth.map((a) => (
              <rect key={a} x="1060" y="105" width="10" height="20" transform={`rotate(${a} 1065 182)`} />
            ))}
          </g>
          <ellipse cx="1065" cy="182" rx="58" ry="58" fill="none" stroke="#d8d8d8" strokeWidth="16" />
          <ellipse cx="1065" cy="182" rx="50" ry="50" fill="url(#mesh)" />
          <path d="M1065 184l-38-46M1065 184l54-34M1065 184l14 54M1065 184l-56 26" stroke="#e3e3e3" strokeWidth="15" />
          <ellipse cx="1063" cy="184" rx="20" ry="20" fill="#bdbdbd" stroke="#777" strokeWidth="3" />
          <ellipse cx="1063" cy="184" rx="8" ry="8" fill="#ededed" stroke="#555" strokeWidth="3" />
          <path d="M974 200q24 0 34 46h-34zM1157 200q-24 0-34 46h34z" fill="#d5d5d5" />
          <path d="M974 222q16 2 20 24h-20zM1157 222q-16 2-20 24h20z" fill="#333" />
        </g>
      </DockIcon>

      <DockIcon vb="1180 55 230 246">
        <g filter="url(#drop)">
          <ellipse cx="1271" cy="75" rx="11" ry="8" fill="none" stroke="#8a8a8a" strokeWidth="4" />
          <rect x="1262" y="76" width="18" height="16" fill="#999" />
          <ellipse cx="1292" cy="177" rx="94" ry="95" fill="#505050" />
          <ellipse cx="1292" cy="176" rx="91" ry="92" fill="url(#chrome)" />
          <ellipse cx="1292" cy="176" rx="78" ry="80" fill="#6a6a6a" />
          <ellipse cx="1292" cy="176" rx="76" ry="78" fill="#dadada" />
          <ellipse cx="1292" cy="176" rx="70" ry="72" fill="url(#compass)" />
          <path d="M1228 150a70 72 0 0 1 128 0q-64 40-128 0z" fill="#fff" opacity=".28" />
          <path d="M1284 128l12 36 34 2-26 18 2 46-16-38-38-2 28-20z" fill="#e6f3fd" opacity=".95" />
          <path d="M1336 129l-28 58-16-18z" fill="#ef3b22" />
          <path d="M1248 227l42-60 16 16z" fill="#f6f6f6" />
          <g fill="#fff" fontFamily="Liberation Sans" fontWeight="bold" fontSize="22" textAnchor="middle">
            <text x="1282" y="130">N</text>
            <text x="1346" y="176">E</text>
            <text x="1302" y="236">S</text>
            <text x="1240" y="196">W</text>
          </g>
        </g>
      </DockIcon>

      <DockIcon vb="-109 55 230 246">
        <g filter="url(#drop)">
          <path d="M-78 72H78q8 0 10 10L99 225v42q0 10-10 10H-82q-10 0-10-10v-42l10-145q1-8 4-8z" fill="url(#silver)" stroke="#8a8a8a" strokeWidth="2" />
          <path d="M-74 76H76q6 0 7 8L96 222H-88L-79 84q1-8 5-8z" fill="url(#orange)" />
          <g stroke="#fff" fill="none" strokeWidth="9">
            <ellipse cx="4" cy="147" rx="21" ry="21" />
            <path d="M-13 181h38M-13 196h38" />
            <path d="M-52 122l17-14M-33 128l17-14" />
            <path d="M20 133l14-10" />
          </g>
          <path d="M44 104l24 14-22 18-22-14z" fill="#fff" />
          <ellipse cx="69" cy="265" rx="6" ry="4" fill="#e0e81c" stroke="#777a10" strokeWidth="2" />
        </g>
      </DockIcon>

      <DockIcon vb="121 55 230 246">
        <g filter="url(#drop)">
          <rect x="131" y="178" width="205" height="38" fill="#e3ae74" stroke="#a8743a" strokeWidth="2" />
          <path d="M140 180v10M152 180v14M164 180v10M176 180v14M188 180v10M200 180v14M212 180v10M224 180v14M236 180v10M248 180v14M260 180v10M272 180v14M284 180v10M296 180v14M308 180v10M320 180v14" stroke="#8a5a28" strokeWidth="2" />
          <path d="M203 135l30 16-67 103-22-14z" fill="#f5e21c" stroke="#a08a10" strokeWidth="2" />
          <path d="M221 146l-66 102" stroke="#b59a0a" strokeWidth="4" />
          <path d="M144 240l22 14-28 22-2-3z" fill="#d8c088" />
          <path d="M138 264l8 4-10 9z" fill="#222" />
          <path d="M203 135l8-14 26 13-4 17z" fill="#c9d0d6" stroke="#777" strokeWidth="1" />
          <path d="M209 122q6-14 18-8 12 6 8 20z" fill="#d8283a" />
          <path d="M221 80q8-6 12 4l62 110-16 12-54-104z" fill="#a8200f" stroke="#5a0e05" strokeWidth="2" />
          <path d="M230 92l56 104" stroke="#e07a5a" strokeWidth="3" />
          <path d="M281 206l16-12 14 34-12 8z" fill="#d8d8d8" stroke="#888" strokeWidth="1" />
          <path d="M299 238l13-10q20 24 18 42l-10 7q-14-10-21-39z" fill="#e0a592" stroke="#a8705c" strokeWidth="1" />
        </g>
      </DockIcon>

      <DockIcon vb="351 55 230 246">
        <g filter="url(#drop)">
          <path d="M366 122l12-24 50-14 12 10 84-20 4 14 20 4-4 130-164 56q-14 2-14-12z" fill="#a9c2dd" stroke="#f0f7fd" strokeWidth="2" />
          <path d="M386 146q0-10 10-12l140-42q12-2 12 8l-6 130-158 48z" fill="url(#folder)" stroke="#f3f9ff" strokeWidth="2" />
          <ellipse cx="498" cy="202" rx="66" ry="72" fill="#5a9cec" />
          <ellipse cx="510" cy="202" rx="63" ry="73" fill="#2956c8" />
          <path d="M518 202l20-63q28 12 33 42z" fill="#8b3fc0" />
          <path d="M518 202l54-28q6 42-22 86z" fill="#f7a11c" />
          <path d="M518 202l34 56q-34 28-76 10z" fill="#c8323a" />
          <path d="M518 202l-42 66q-20-8-30-26z" fill="#3c9c1c" />
          <path d="M448 180q10-44 60-50 30 4 36 18-50-4-96 32z" fill="#fff" opacity=".2" />
        </g>
      </DockIcon>

      <DockIcon vb="581 55 230 246">
        <g filter="url(#drop)">
          <path d="M594 124l158-34q6 0 8 6l33 150-176 36q-5 0-5-5z" fill="#2b2b2b" />
          <path d="M598 160l160-38 30 118-170 36z" fill="#e6e6e6" />
          <path d="M606 168l152-36 20 96q-70 16-150 40z" fill="#fbfbfb" />
          <path d="M628 262q80-12 152-30M624 270q90-14 162-30" stroke="#999" strokeWidth="2" fill="none" />
          <path d="M598 124l148-32q6 0 8 6l8 30-158 36z" fill="#c0303a" />
          <path d="M684 124l26-6M688 132l26-6M690 140l26-6M722 116l24-5M724 124l24-5M726 132l24-5" stroke="#e79aa0" strokeWidth="4" strokeDasharray="4 2" />
          <path d="M625 124v-26q0-12 6 0l1 24M714 106V80q0-12 6 0l2 24" fill="none" stroke="#9a9a9a" strokeWidth="6" />
          <g fontFamily="Liberation Sans" fontWeight="bold" transform="rotate(-8 690 180)">
            <text x="606" y="144" fontSize="25" fill="#fff" textLength="46" lengthAdjust="spacingAndGlyphs">JUL</text>
            <text x="640" y="224" fontSize="92" fill="#262626" textLength="94" lengthAdjust="spacingAndGlyphs">17</text>
          </g>
        </g>
      </DockIcon>

      <DockIcon vb="810 55 230 246">
        <g filter="url(#drop)">
          <path d="M833 96l150-24 18 110-150 30z" fill="#fff" />
          <path d="M844 104l132-20 12 90-134 20z" fill="#a8906a" />
          <path d="M850 120l20-8 16 10 26-14 20 12 40-16" stroke="#e3cfa8" strokeWidth="6" fill="none" />
          <path d="M818 158l136-66 50 96-120 84z" fill="#fff" />
          <path d="M834 162l114-56 40 78-98 70z" fill="#4f86d8" />
          <path d="M842 178q50-18 118-44l12 22-112 54z" fill="#9dbfe8" />
          <path d="M858 210l114-54 16 28-98 70z" fill="#2d62b8" />
          <path d="M878 236q-2-42 12-54l26-4q18 10 20 34l-4 14-38 24z" fill="#3a241c" />
          <ellipse cx="894" cy="160" rx="20" ry="22" fill="#2b1a12" />
          <path d="M882 162q14-12 28-4l2 20q-14 14-26 2z" fill="#c08058" />
          <path d="M906 206l14-14 6 6-10 18z" fill="#c08058" />
          <path d="M908 192l12 14" stroke="#c8402c" strokeWidth="4" />
          <ellipse cx="986" cy="222" rx="38" ry="28" fill="#d5dde6" opacity=".75" stroke="#f5f5f5" strokeWidth="3" />
          <ellipse cx="982" cy="184" rx="35" ry="37" fill="#161618" />
          <ellipse cx="987" cy="178" rx="29" ry="27" fill="#f2f2f2" />
          <ellipse cx="988" cy="179" rx="25" ry="23" fill="#222a34" />
          <ellipse cx="988" cy="180" rx="17" ry="16" fill="#b8d0ea" />
          <ellipse cx="986" cy="176" rx="7" ry="6" fill="#fff" />
        </g>
      </DockIcon>

      <DockIcon vb="1040 55 230 246">
        <g filter="url(#drop)">
          <path d="M1150 92l84-6 18 146-60 10z" fill="#f2f2ee" stroke="#bbb" strokeWidth="2" />
          <path d="M1130 98l92-12 18 140-60 20z" fill="#dfe2ea" stroke="#b5b5b5" strokeWidth="1" />
          <path d="M1056 180l132-76 50 96-132 84z" fill="#8fa4ee" stroke="#c8d3ff" strokeWidth="2" />
          <g fill="none" stroke="#d5deff" strokeWidth="2">
            <ellipse cx="1138" cy="196" rx="32" ry="34" />
            <ellipse cx="1138" cy="196" rx="17" ry="18" />
            <path d="M1166 140l14-8 22 44-14 10zM1090 244l36-22 8 16-34 22z" />
          </g>
          <ellipse cx="1103" cy="128" rx="53" ry="54" fill="url(#globe)" />
          <path d="M1066 106q8-16 24-20l10 6-8 10-4 10-10 8-8-4zM1078 128l16 4 4 12-8 20-8-10zM1112 92l16-4 12 8-10 8-8-4zM1114 112l18-4 14 12-6 18-8 16-10-10-2-14-10-8z" fill="#8a9a5a" opacity=".9" />
          <path d="M1070 98q20-18 50-14M1062 140q20 10 40 4M1110 170q20 0 30-14" stroke="#fff" strokeWidth="3" fill="none" opacity=".6" />
          <path d="M1209 142l20 4-34 116q-10 4-20-2z" fill="#d98a24" stroke="#8a5210" strokeWidth="2" />
          <path d="M1192 112q30-16 58 12l8 32-10 2-16-16-26 2-2-12q-6 0-10-10z" fill="#3b3e42" stroke="#1a1a1a" strokeWidth="2" />
          <path d="M1200 114q24-8 44 10" stroke="#d5d8dc" strokeWidth="4" fill="none" />
        </g>
      </DockIcon>

      <DockIcon vb="1270 55 230 246">
        <g filter="url(#drop)">
          <path d="M1280 114l60-8 30 108-74 14z" fill="#f3f3f3" stroke="#c5c5c5" strokeWidth="1" />
          <path d="M1284 124l22-3" stroke="#444" strokeWidth="6" strokeDasharray="5 2" />
          <path d="M1312 120l28-5" stroke="#d84a62" strokeWidth="6" strokeDasharray="8 2" />
          <path d="M1282 148l44 66 18 40-48-30z" fill="#dcdcdc" />
          <path d="M1300 130l60-20 8-20 24-8 32 4 10 16 22 6q16 28 34 74l-146 76q-22-60-44-128z" fill="#a9c8ea" opacity=".95" stroke="#eaf4ff" strokeWidth="3" />
          <path d="M1324 148l70-16M1328 158l70-16M1332 168l66-16M1336 178l60-14" stroke="#d5e6f6" strokeWidth="3" opacity=".8" />
          <path d="M1324 214q84 4 150-62l16 30-146 76z" fill="#4f86c4" opacity=".8" />
          <path d="M1348 194l40-8 6 20-40 10z" fill="#2e5488" opacity=".85" />
        </g>
      </DockIcon>
    </nav>
  );
}

export default function App() {
  return (
    <main dir="ltr" className="relative h-[1200px] w-[1920px] overflow-hidden bg-[#2e5fa5] font-['DejaVu_Sans',sans-serif] text-black">
      <Wallpaper />
      <PageEditorWindow />
      <SettingsWindow />
      <ImageEditorWindow />
      <NewsWindow />
      <CalendarWindow />
      <GalleryWindow />
      <BrowserWindow />
      <ReportsWindow />
      <FileManagerWindow />
      <Dock />
    </main>
  );
}
